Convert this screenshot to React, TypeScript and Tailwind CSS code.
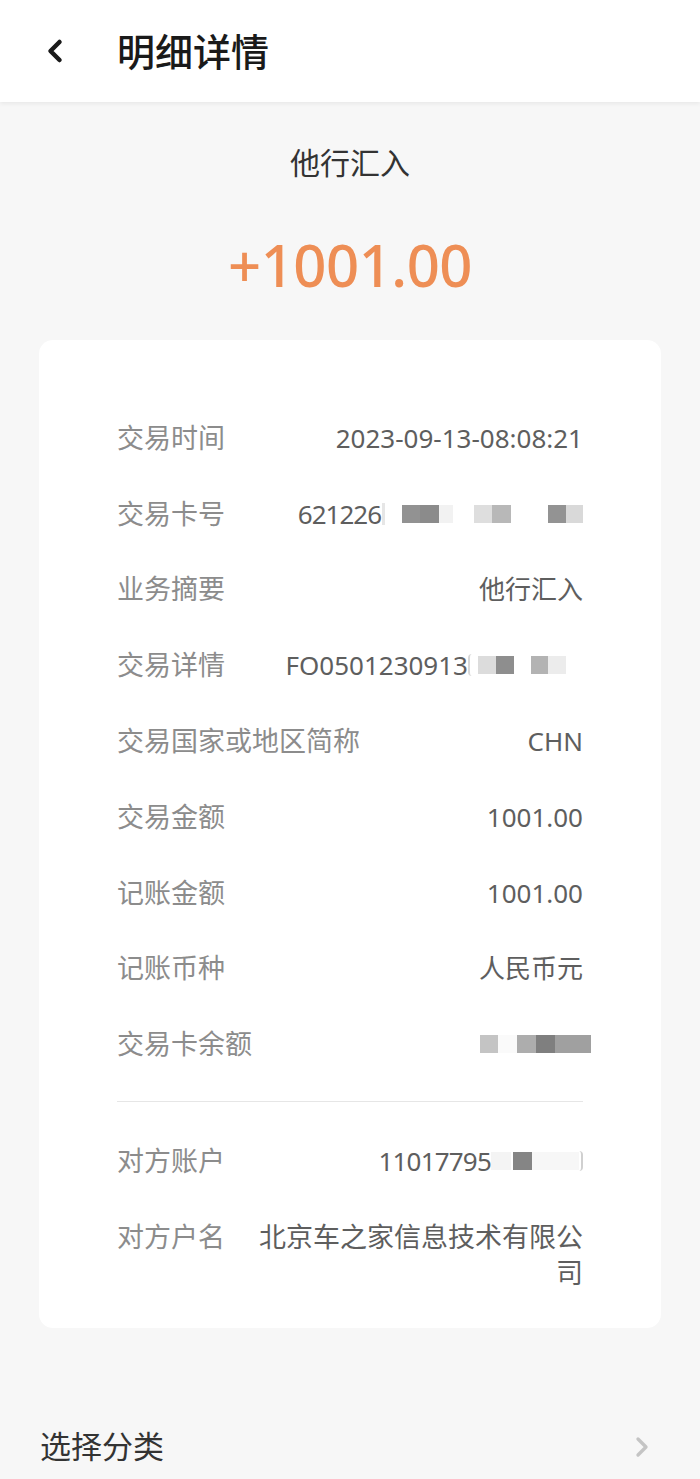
import { ChevronLeft, ChevronRight } from 'lucide-react';

type Block = { w: number; c: string; gap?: number };

const Blocks = ({ items }: { items: Block[] }) => (
  <span className="flex items-center">
    {items.map((b, i) => (
      <span
        key={i}
        className="inline-block h-[18px]"
        style={{ width: b.w, backgroundColor: b.c, marginLeft: b.gap ?? 0 }}
      />
    ))}
  </span>
);

const Row = ({ label, children, top }: { label: string; children: React.ReactNode; top?: boolean }) => (
  <div className={`flex ${top ? 'items-start' : 'items-center'} gap-8 py-[19.9px] leading-[36px]`}>
    <span className="shrink-0 text-[27px] text-[#8c8c8c]">{label}</span>
    <div className="flex flex-1 justify-end text-right text-[26px] text-[#5e5e5e]">{children}</div>
  </div>
);

export default function App() {
  return (
    <div
      className="min-h-[1479px] w-[700px] bg-[#f7f7f7]"
      style={{ fontFamily: '"Noto Sans", "Noto Sans CJK SC", sans-serif' }}
    >
      <header className="relative flex h-[102px] items-center bg-white shadow-[0_2px_4px_rgba(0,0,0,0.06)]">
        <ChevronLeft size={36} strokeWidth={3} className="ml-[37px] text-[#1a1a1a]" />
        <h1 className="ml-[44px] text-[38px] font-medium leading-none text-[#1a1a1a]">明细详情</h1>
      </header>

      <div className="mt-[46px] text-center text-[30px] leading-[30px] text-[#333]">他行汇入</div>
      <div className="mt-[58px] text-center text-[58px] font-medium leading-[58px] tracking-[-0.5px] text-[#ee8e55]">
        +1001.00
      </div>

      <div className="mx-[39px] mt-[46px] rounded-[14px] bg-white px-[78px] pb-[17px] pt-[60px]">
        <Row label="交易时间">2023-09-13-08:08:21</Row>
        <Row label="交易卡号">
          <span className="flex items-center">
            <span className="tracking-[-1px]">621226</span>
            <span className="ml-[1px] inline-block h-[22px] w-[3px] bg-[#e6e6e6]" />
            <Blocks
              items={[
                { w: 18, c: '#929292', gap: 17 },
                { w: 19, c: '#8b8b8b' },
                { w: 14, c: '#f2f2f2' },
                { w: 18, c: '#dedede', gap: 21 },
                { w: 19, c: '#b8b8b8' },
                { w: 18, c: '#939393', gap: 37 },
                { w: 17, c: '#d9d9d9' },
              ]}
            />
          </span>
        </Row>
        <Row label="业务摘要">他行汇入</Row>
        <Row label="交易详情">
          <span className="flex items-center">
            <span>FO0501230913</span>
            <span className="inline-block h-[22px] w-[4px] rounded-l-full border-l-2 border-[#d8d8d8]" />
            <Blocks
              items={[
                { w: 18, c: '#dcdcdc', gap: 6 },
                { w: 18, c: '#8e8e8e' },
                { w: 17, c: '#b3b3b3', gap: 17 },
                { w: 18, c: '#ececec' },
                { w: 17, c: 'transparent' },
              ]}
            />
          </span>
        </Row>
        <Row label="交易国家或地区简称">CHN</Row>
        <Row label="交易金额">1001.00</Row>
        <Row label="记账金额">1001.00</Row>
        <Row label="记账币种">人民币元</Row>
        <Row label="交易卡余额">
          <span className="-mr-[8px] flex h-[36px] items-center">
            <Blocks
              items={[
                { w: 18, c: '#c4c4c4' },
                { w: 19, c: '#fafafa' },
                { w: 19, c: '#adadad' },
                { w: 19, c: '#7f7f7f' },
                { w: 36, c: '#a0a0a0' },
              ]}
            />
          </span>
        </Row>

        <div className="mb-[21px] mt-[19px] h-px bg-[#e6e6e6]" />

        <Row label="对方账户">
          <span className="flex items-center">
            <span className="tracking-[-0.8px]">11017795</span>
            <Blocks
              items={[
                { w: 20, c: '#f4f4f4' },
                { w: 19, c: '#858585', gap: 2 },
                { w: 47, c: '#f7f7f7' },
              ]}
            />
            <span className="inline-block h-[20px] w-[4px] rounded-r-full border-r-2 border-[#d0d0d0]" />
          </span>
        </Row>
        <Row label="对方户名" top>
          <span className="text-[27px]">北京车之家信息技术有限公司</span>
        </Row>
      </div>

      <div className="mt-[103px] flex items-center justify-between pl-[40px] pr-[42px]">
        <span className="text-[31px] leading-[31px] text-[#333]">选择分类</span>
        <ChevronRight size={32} strokeWidth={2.5} className="text-[#c4c4c4]" />
      </div>
    </div>
  );
}
